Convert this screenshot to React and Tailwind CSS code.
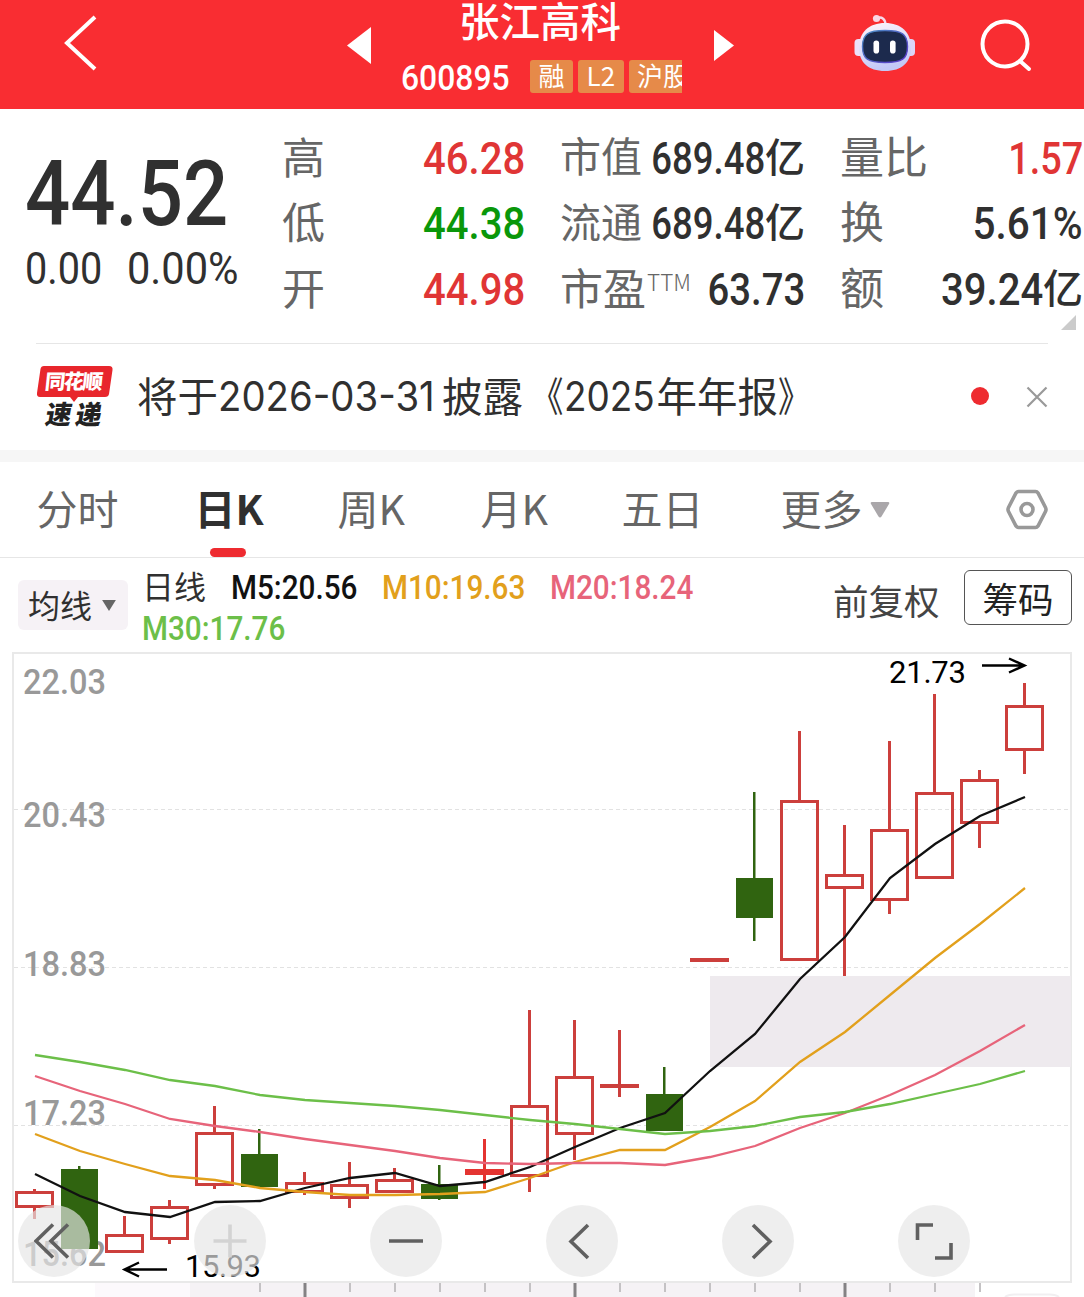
import clsx from 'clsx';

const TAGS = ['融', 'L2', '沪股通'];

const TABS = [
  { label: '分时', width: 'w-[158px]' },
  { label: '日K', width: 'w-[143px]', active: true },
  { label: '周K', width: 'w-[143px]' },
  { label: '月K', width: 'w-[141px]' },
  { label: '五日', width: 'w-[159px]' },
];

// x centre of the first candle and the distance between two candles
const X0 = 34.5;
const STEP = 45;
const TOP = 652;

// [high, body top, body bottom, low, kind]
const CANDLES = [
  [1189, 1191, 1208, 1219, 'up'],
  [1166, 1169, 1249, 1249, 'down'],
  [1216, 1234, 1253, 1253, 'up'],
  [1200, 1206, 1240, 1244, 'up'],
  [1106, 1132, 1186, 1189, 'up'],
  [1129, 1154, 1187, 1187, 'down'],
  [1172, 1182, 1193, 1195, 'up'],
  [1162, 1184, 1199, 1208, 'up'],
  [1168, 1179, 1193, 1193, 'up'],
  [1165, 1184, 1199, 1200, 'down'],
  [1139, 1169, 1175, 1189, 'flat'],
  [1010, 1105, 1177, 1192, 'up'],
  [1020, 1076, 1135, 1160, 'up'],
  [1030, 1084, 1088, 1097, 'flat'],
  [1067, 1094, 1131, 1131, 'down'],
  [958, 958, 962, 962, 'flat'],
  [792, 878, 918, 941, 'down'],
  [731, 800, 961, 961, 'up'],
  [825, 874, 889, 976, 'up'],
  [741, 829, 901, 914, 'up'],
  [694, 792, 879, 879, 'up'],
  [770, 779, 824, 848, 'up'],
  [683, 705, 751, 774, 'up'],
];

const LINES = [
  {
    id: 'M5',
    color: '#111111',
    ys: [1174, 1196, 1212, 1217, 1202, 1201, 1188, 1178, 1173, 1186, 1182, 1167, 1147, 1128, 1113, 1071, 1034, 979, 937, 878, 844, 816, 797],
  },
  {
    id: 'M10',
    color: '#e2a01c',
    ys: [1134, 1151, 1164, 1176, 1180, 1188, 1192, 1195, 1195, 1194, 1192, 1178, 1162, 1150, 1150, 1127, 1101, 1062, 1032, 995, 958, 924, 888],
  },
  {
    id: 'M20',
    color: '#e7647a',
    ys: [1076, 1091, 1104, 1119, 1126, 1132, 1139, 1145, 1151, 1158, 1163, 1164, 1163, 1163, 1165, 1157, 1146, 1128, 1113, 1095, 1075, 1051, 1025],
  },
  {
    id: 'M30',
    color: '#6cbf49',
    ys: [1055, 1062, 1070, 1080, 1086, 1095, 1100, 1103, 1106, 1110, 1115, 1120, 1124, 1129, 1134, 1131, 1126, 1117, 1112, 1104, 1094, 1084, 1071],
  },
];

const AXIS = [
  { text: '22.03', y: 694 },
  { text: '20.43', y: 827 },
  { text: '18.83', y: 976 },
  { text: '17.23', y: 1125 },
  { text: '15.62', y: 1266 },
];

function Stat({
  label,
  sup,
  value,
  unit,
  color = 'text-[#303030]',
  labelSize = 'text-[43px]',
  scale = 'scale-x-[0.91]',
}) {
  return (
    <div className="flex h-[65.5px] items-center justify-between whitespace-nowrap">
      <span className={clsx('relative -top-[4px] flex shrink-0 text-[#666]', labelSize)}>
        {label}
        {sup && <span className="mt-[11px] ml-px text-[22.5px] font-light">{sup}</span>}
      </span>
      <span className={clsx('-ml-6 flex shrink-0 items-center', color)}>
        <span className={clsx('inline-block origin-right font-[Roboto] text-[44px] font-medium', scale)}>{value}</span>
        {unit && <span className="relative -top-[4px] text-[40px] font-medium">{unit}</span>}
      </span>
    </div>
  );
}

function Robot() {
  return (
    <svg width="62" height="58" viewBox="0 0 62 58" fill="none">
      <defs>
        <linearGradient id="shell" x1="0" y1="0" x2="0.3" y2="1">
          <stop offset="0" stopColor="#fff4fa" />
          <stop offset="0.6" stopColor="#dcdcfb" />
          <stop offset="1" stopColor="#c3c8f6" />
        </linearGradient>
        <linearGradient id="rim" x1="0" y1="0" x2="1" y2="1">
          <stop offset="0" stopColor="#4a8fc4" />
          <stop offset="1" stopColor="#5a34c8" />
        </linearGradient>
      </defs>
      <path d="M23 4C28 2.500 31.500 5 31.500 11" stroke="#f6d8ea" strokeWidth="2.400" />
      <circle cx="22.500" cy="4.500" r="3.600" fill="#f9d5e4" />
      <rect x="0.500" y="25" width="10" height="17" rx="4" fill="#ece0fa" />
      <rect x="51" y="25" width="10" height="17" rx="4" fill="#dcd5f8" />
      <path d="M31 9C47 9 57 18 57 34C57 48 48 57 31 57C14 57 5 48 5 34C5 18 15 9 31 9Z" fill="url(#shell)" />
      <path
        d="M31 16.500C48 16.500 53.500 20 53.500 32.500C53.500 45 48 48.500 31 48.500C14 48.500 8.500 45 8.500 32.500C8.500 20 14 16.500 31 16.500Z"
        fill="#1c2a4d"
        stroke="url(#rim)"
        strokeWidth="1.400"
      />
      <rect x="19.500" y="26.500" width="5.600" height="13" rx="2.800" fill="#fff" />
      <rect x="36" y="26.500" width="5.600" height="13" rx="2.800" fill="#fff" />
    </svg>
  );
}

function Header() {
  return (
    <header className="flex h-[109px] bg-[#f92d32] text-white">
      <div className="w-[347px] shrink-0 pt-[14px] pl-[63px]">
        <svg width="36" height="60" viewBox="0 0 36 60" fill="none" stroke="#fff" strokeWidth="4">
          <path d="M32 3L4 29L32 55" />
        </svg>
      </div>
      <div className="flex w-[388px] shrink-0">
        <svg className="mt-[27px]" width="24" height="37" viewBox="0 0 24 37" fill="#fff">
          <path d="M0 18.500L24 0V37Z" />
        </svg>
        <div className="ml-[30px] flex w-[281px] shrink-0 flex-col">
          <div className="h-[46px] pl-[58px] text-[40.5px] leading-[40px] font-medium whitespace-nowrap">张江高科</div>
          <div className="flex h-[62px] items-start overflow-hidden pt-[14px]">
            <span className="w-[129px] shrink-0">
              <span className="inline-block origin-left scale-x-[0.91] font-[Roboto] text-[35px] leading-[38px] font-medium">
                600895
              </span>
            </span>
            <div className="flex gap-[5px]">
              {TAGS.map((tag) => (
                <span
                  key={tag}
                  className="h-[33px] shrink-0 rounded-[3px] bg-[#e68a49] px-[8.500px] text-[26px] leading-[30px] whitespace-nowrap"
                >
                  {tag}
                </span>
              ))}
            </div>
          </div>
        </div>
        <svg className="mt-[30px] ml-[32px]" width="20" height="31" viewBox="0 0 20 31" fill="#fff">
          <path d="M20 15.500L0 0V31Z" />
        </svg>
      </div>
      <div className="ml-auto flex w-[230px] justify-between pt-[14px] pr-[52px]">
        <Robot />
        <svg className="mt-1" width="52" height="54" viewBox="0 0 52 54" fill="none" stroke="#fff" strokeWidth="4">
          <circle cx="25" cy="26" r="22.500" />
          <path d="M40 43L49 51" strokeLinecap="round" />
        </svg>
      </div>
    </header>
  );
}

function Quote() {
  return (
    <section className="flex h-[234px] pt-[17px]">
      <div className="w-[282px] pl-[25px] font-[Roboto] text-[#303030]">
        <div className="mt-[20px] h-[98px] origin-left scale-x-[0.885] text-[90px] leading-[98px] font-medium">44.52</div>
        <div className="flex text-[44px] leading-[50px]">
          <span className="w-[102px]">
            <span className="inline-block origin-left scale-x-[0.9]">0.00</span>
          </span>
          <span className="origin-left scale-x-[0.945]">0.00%</span>
        </div>
      </div>
      <div className="w-[243px]">
        <Stat label="高" value="46.28" color="text-[#e03535]" />
        <Stat label="低" value="44.38" color="text-[#0a970a]" />
        <Stat label="开" value="44.98" color="text-[#e03535]" />
      </div>
      <div className="ml-[35px] w-[245px]">
        <Stat label="市值" value="689.48" unit="亿" labelSize="text-[41px]" scale="scale-x-[0.83]" />
        <Stat label="流通" value="689.48" unit="亿" labelSize="text-[41px]" scale="scale-x-[0.83]" />
        <Stat label="市盈" sup="TTM" value="63.73" scale="scale-x-[0.87]" />
      </div>
      <div className="ml-[35px] w-[243px]">
        <Stat label="量比" value="1.57" color="text-[#e03535]" labelSize="text-[44px]" scale="scale-x-[0.86]" />
        <Stat label="换" value="5.61%" labelSize="text-[44px]" scale="scale-x-[0.92]" />
        <Stat label="额" value="39.24" unit="亿" labelSize="text-[44px]" />
        <svg className="-mt-[8px] ml-auto mr-[7px]" width="15" height="15" viewBox="0 0 15 15" fill="#cbcbcb">
          <path d="M15 0V15H0Z" />
        </svg>
      </div>
    </section>
  );
}

function Notice() {
  return (
    <section className="mx-9 flex h-[107px] items-center border-t border-[#e6e6e6] pb-[3px] text-[#303030]">
      <svg width="78" height="66" viewBox="0 0 78 66">
        <path
          d="M8 3H73Q77 3 76.500 7L73 31Q72.500 34 69 34H42L38 39L34 34H4Q0.500 34 1 30L4.500 6Q5 3 8 3Z"
          fill="#e8262c"
        />
        <text x="9" y="26" fill="#fff" fontSize="20.500" fontWeight="900" transform="skewX(-6) translate(2 0)" textLength="58">
          同花顺
        </text>
        <text x="9" y="61" fill="#222" fontSize="26" fontWeight="900" transform="skewX(-10) translate(10 0)" textLength="56">
          速递
        </text>
      </svg>
      <p className="ml-[23px] flex text-[40.5px] leading-[60px] whitespace-nowrap">
        <span className="-mt-px">将于</span>
        <span className="w-[224px] font-[Inter] text-[41px]">
          <span className="inline-block origin-left scale-x-[0.935]">2026-03-31</span>
        </span>
        <span className="-mt-px">披露</span>
        <span className="-mt-px origin-right scale-x-[0.8]">《</span>
        <span className="w-[93px] font-[Inter] text-[41px]">
          <span className="inline-block origin-left scale-x-[0.9]">2025</span>
        </span>
        <span className="-mt-px">年年报</span>
        <span className="-mt-px origin-left scale-x-[0.8]">》</span>
      </p>
      <span className="mr-[37px] ml-auto size-[18px] rounded-full bg-[#ee2b30]" />
      <svg className="mt-0.5" width="22" height="22" viewBox="0 0 22 22" stroke="#999" strokeWidth="2.200">
        <path d="M1.500 1.500L20.500 20.500M20.500 1.500L1.500 20.500" />
      </svg>
    </section>
  );
}

function Tabs() {
  return (
    <nav className="flex h-24 border-b border-[#e6e6e6] pl-[36.5px] text-[41px] text-[#666]">
      {TABS.map((tab) => (
        <div key={tab.label} className={clsx('flex shrink-0 flex-col', tab.width)}>
          <span className={clsx('h-[86px] leading-[91px]', tab.active && 'font-bold text-[#303030]')}>{tab.label}</span>
          {tab.active && <span className="ml-[15.5px] h-[9px] w-9 rounded-full bg-[#ee2b30]" />}
        </div>
      ))}
      <span className="leading-[91px]">更多</span>
      <svg className="mt-10 ml-[7.5px]" width="20" height="16" viewBox="0 0 20 16" fill="#aaa7aa">
        <path d="M2 0H18Q20 0 19 2L11.500 14.500Q10 16.500 8.500 14.500L1 2Q0 0 2 0Z" />
      </svg>
      <svg className="mt-[27px] mr-9 ml-auto" width="42" height="41" viewBox="0 0 42 41" fill="none" stroke="#999" strokeWidth="3.600">
        <path d="M12.500 2.500H29.500Q31 2.500 32 4L39.500 18.500Q40.500 20.500 39.500 22.500L32 37Q31 38.500 29.500 38.500H12.500Q11 38.500 10 37L2.500 22.500Q1.500 20.500 2.500 18.500L10 4Q11 2.500 12.500 2.500Z" />
        <circle cx="21" cy="20.500" r="6" />
      </svg>
    </nav>
  );
}

function Averages() {
  return (
    <section className="flex h-[94px] text-[32px] whitespace-nowrap">
      <button className="mt-[22px] ml-[18px] flex h-[50px] w-[110px] items-center rounded-md bg-[#f6f2f6] pl-[10px] text-[#303030]">
        <span className="-mt-[3px]">均线</span>
        <svg className="ml-[9px]" width="16" height="11" viewBox="0 0 17 12" fill="#666">
          <path d="M1 0H16L8.500 12Z" />
        </svg>
      </button>
      <div className="ml-[14px] w-[660px] pt-[9px] font-[Roboto] text-[33px] leading-[41px] font-medium">
        <div className="flex h-[41px]">
          <span className="w-[89px] font-['Noto_Sans_CJK_SC'] text-[32px] leading-[37px] font-normal text-[#303030]">日线</span>
          <span className="w-[151px] origin-left scale-x-[0.9] text-[#111]">M5:20.56</span>
          <span className="w-[168px] origin-left scale-x-[0.9] text-[#e2a01c]">M10:19.63</span>
          <span className="origin-left scale-x-[0.9] text-[#e7647a]">M20:18.24</span>
        </div>
        <div className="origin-left scale-x-[0.9] text-[#6cbf49]">M30:17.76</div>
      </div>
      <span className="ml-[31px] text-[35.5px] leading-[84px] text-[#444]">前复权</span>
      <button className="mt-3 mr-3 ml-auto h-[55px] w-[108px] rounded-md border border-[#555] text-[35.5px] leading-[50px] text-[#222]">
        筹码
      </button>
    </section>
  );
}

function Candle({ index, data }) {
  const [high, top, bottom, low, kind] = data;
  const x = X0 + index * STEP;
  if (kind === 'down') {
    return (
      <g fill="#306410">
        <rect x={x - 1.5} y={high} width="2.500" height={low - high} />
        <rect x={x - 18.5} y={top} width="37" height={bottom - top} />
      </g>
    );
  }
  return (
    <g fill={index === 10 ? '#e43431' : '#cc3f3c'}>
      <rect x={x - 1.5} y={high} width="3" height={top - high} />
      <rect x={x - 1.5} y={bottom} width="3" height={low - bottom} />
      {kind === 'flat' ? (
        <rect x={x - 19.5} y={top} width="39" height={bottom - top} />
      ) : (
        <rect
          x={x - 18}
          y={top + 1.5}
          width="36"
          height={bottom - top - 3}
          fill="none"
          stroke="#cc3f3c"
          strokeWidth="3"
        />
      )}
    </g>
  );
}

function RoundButton({ faded, children }) {
  return (
    <button className="flex size-[72px] items-center justify-center rounded-full bg-[#e5e5e5]/67">
      <svg
        width="40"
        height="40"
        viewBox="0 0 40 40"
        fill="none"
        stroke={faded ? '#d3d3d3' : '#606060'}
        strokeWidth="3.600"
      >
        {children}
      </svg>
    </button>
  );
}

function Chart() {
  return (
    <section className="relative h-[645px] overflow-hidden">
      <svg className="block" width="1084" height="645" viewBox={`0 ${TOP} 1084 645`}>
        <rect x="190" y="1283" width="785" height="14" fill="#f5f2f5" />
        <rect x="95" y="1283" width="95" height="14" fill="#fcf9fc" />
        <rect x="13" y="653" width="1058" height="629" fill="#fff" stroke="#e9e9e9" strokeWidth="2" />
        {[809.5, 967.5, 1125.5].map((y) => (
          <path key={y} d={`M14 ${y}H1070`} stroke="#e2e2e2" strokeDasharray="4 3" />
        ))}
        <rect x="710" y="976" width="361" height="91" fill="#eeeaee" />
        {AXIS.map(({ text, y }) => (
          <text
            key={text}
            x="23"
            y={y}
            fill="#999"
            fontSize="35"
            fontWeight="500"
            fontFamily="Roboto"
            textLength="83"
            lengthAdjust="spacingAndGlyphs"
          >
            {text}
          </text>
        ))}
        {CANDLES.map((data, i) => (
          <Candle key={i} index={i} data={data} />
        ))}
        {LINES.map(({ id, color, ys }) => (
          <polyline
            key={id}
            points={ys.map((y, i) => `${X0 + 0.5 + i * STEP},${y}`).join(' ')}
            fill="none"
            stroke={color}
            strokeWidth="2.300"
          />
        ))}
        <g fontFamily="Roboto" fontSize="31" fill="#000">
          <text x="889" y="683" textLength="77">
            21.73
          </text>
          <text x="185" y="1277" textLength="76">
            15.93
          </text>
        </g>
        <g fill="none" stroke="#000" strokeWidth="2.400">
          <path d="M982 665.500H1024M1009 658.500L1024.500 665.500L1009 672.500" />
          <path d="M167 1269.500H125M139 1262.500L124.500 1269.500L139 1276.500" />
        </g>
        {/* time ticks */}
        {CANDLES.map((_, i) => {
          if (i < 5 || i > 21) return null;
          const major = i % 6 === 0;
          return (
            <rect
              key={i}
              x={X0 + i * STEP - (major ? 1 : 0.5)}
              y="1283"
              width={major ? 3 : 2}
              height={major ? 14 : 9}
              fill={major ? '#848284' : '#c4c2c4'}
            />
          );
        })}
        <path d="M1005 1297Q1008 1294.500 1014 1294.500H1050Q1056 1294.500 1059 1297" fill="none" stroke="#f1eff1" strokeWidth="2" />
      </svg>
      <div className="absolute top-[553px] left-[18px] flex gap-[104px]">
        <RoundButton>
          <path d="M19 3.500L2 20L19 36.500M34 3.500L17 20L34 36.500" />
        </RoundButton>
        <RoundButton faded>
          <path d="M3.500 20H36.500M20 3.500V36.500" />
        </RoundButton>
        <RoundButton>
          <path d="M3 20H37" />
        </RoundButton>
        <RoundButton>
          <path d="M26 4L9 20.500L26 37" />
        </RoundButton>
        <RoundButton>
          <path d="M15 4L32 20.500L15 37" />
        </RoundButton>
        <RoundButton>
          <path d="M3.500 19V4H19M37 22V37H21" />
        </RoundButton>
      </div>
    </section>
  );
}

export default function App() {
  return (
    <div className="h-[1297px] w-[1084px] overflow-hidden bg-white font-['Noto_Sans_CJK_SC',sans-serif]">
      <Header />
      <Quote />
      <Notice />
      <div className="h-3 bg-[#f6f6f6]" />
      <Tabs />
      <Averages />
      <Chart />
    </div>
  );
}
